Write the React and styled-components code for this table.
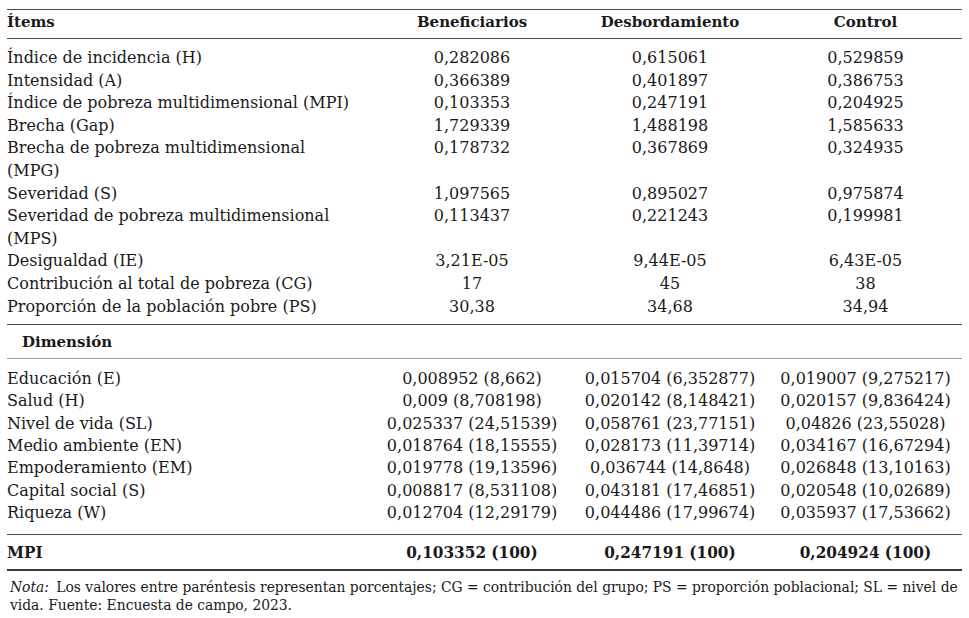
import React from 'react';
import styled, { createGlobalStyle } from 'styled-components';

const GlobalStyle = createGlobalStyle`
  html, body {
    margin: 0;
    padding: 0;
    background: #ffffff;
  }
  body {
    font-family: "DejaVu Serif", "Liberation Serif", serif;
    color: #1a1a1a;
  }
`;

const Page = styled.div`
  width: 969px;
  height: 618px;
  padding: 9px 7px 0 7px;
  box-sizing: border-box;
  overflow: hidden;
`;

const Table = styled.div`
  width: 955px;
  display: flex;
  flex-direction: column;
`;

const Row = styled.div`
  display: grid;
  grid-template-columns: 366px 198px 198px 1fr;
  align-items: start;
  font-size: 16px;
  line-height: ${(p) => p.$lh || '22.6px'};
`;

const HeadRow = styled(Row)`
  border-top: 1.5px solid #4a4a4a;
  border-bottom: 1.5px solid #4a4a4a;
  height: 25px;
  padding-bottom: 3px;
  align-items: center;
  font-size: 15px;
  font-weight: bold;
`;

const Section = styled.div`
  display: flex;
  flex-direction: column;
  padding: ${(p) => p.$pad};
  border-bottom: 1.5px solid #4a4a4a;
`;

const SubHead = styled.div`
  height: 33px;
  display: flex;
  align-items: center;
  padding-left: 15px;
  font-size: 15px;
  font-weight: bold;
  border-bottom: 1px solid #9a9a9a;
`;

const Label = styled.div`
  text-align: left;
  padding-right: 16px;
`;

const Cell = styled.div`
  text-align: center;
  white-space: nowrap;
`;

const TotalRow = styled(Row)`
  height: 34px;
  align-items: center;
  font-family: "DejaVu Serif Condensed", "Liberation Serif", serif;
  font-weight: bold;
  font-size: 17px;
  border-bottom: 2.5px solid #3a3a3a;
`;

const Note = styled.p`
  margin: 7px 0 0 3px;
  font-family: "DejaVu Serif Condensed", "Liberation Serif", serif;
  font-size: 15.4px;
  line-height: 18px;
`;

const NoteLead = styled.em`
  font-style: italic;
  margin-right: 3px;
`;

const items = [
  ['Índice de incidencia (H)', '0,282086', '0,615061', '0,529859'],
  ['Intensidad (A)', '0,366389', '0,401897', '0,386753'],
  ['Índice de pobreza multidimensional (MPI)', '0,103353', '0,247191', '0,204925'],
  ['Brecha (Gap)', '1,729339', '1,488198', '1,585633'],
  ['Brecha de pobreza multidimensional (MPG)', '0,178732', '0,367869', '0,324935'],
  ['Severidad (S)', '1,097565', '0,895027', '0,975874'],
  ['Severidad de pobreza multidimensional (MPS)', '0,113437', '0,221243', '0,199981'],
  ['Desigualdad (IE)', '3,21E-05', '9,44E-05', '6,43E-05'],
  ['Contribución al total de pobreza (CG)', '17', '45', '38'],
  ['Proporción de la población pobre (PS)', '30,38', '34,68', '34,94'],
];

const dimensions = [
  ['Educación (E)', '0,008952 (8,662)', '0,015704 (6,352877)', '0,019007 (9,275217)'],
  ['Salud (H)', '0,009 (8,708198)', '0,020142 (8,148421)', '0,020157 (9,836424)'],
  ['Nivel de vida (SL)', '0,025337 (24,51539)', '0,058761 (23,77151)', '0,04826 (23,55028)'],
  ['Medio ambiente (EN)', '0,018764 (18,15555)', '0,028173 (11,39714)', '0,034167 (16,67294)'],
  ['Empoderamiento (EM)', '0,019778 (19,13596)', '0,036744 (14,8648)', '0,026848 (13,10163)'],
  ['Capital social (S)', '0,008817 (8,531108)', '0,043181 (17,46851)', '0,020548 (10,02689)'],
  ['Riqueza (W)', '0,012704 (12,29179)', '0,044486 (17,99674)', '0,035937 (17,53662)'],
];

const DataRow = ({ row, lh }) => (
  <Row $lh={lh}>
    <Label>{row[0]}</Label>
    <Cell>{row[1]}</Cell>
    <Cell>{row[2]}</Cell>
    <Cell>{row[3]}</Cell>
  </Row>
);

export default function App() {
  return (
    <>
      <GlobalStyle />
      <Page>
        <Table>
          <HeadRow>
            <Label>Ítems</Label>
            <Cell>Beneficiarios</Cell>
            <Cell>Desbordamiento</Cell>
            <Cell>Control</Cell>
          </HeadRow>
          <Section $pad="8px 0 6px 0">
            {items.map((r) => (
              <DataRow key={r[0]} row={r} />
            ))}
          </Section>
          <SubHead>Dimensión</SubHead>
          <Section $pad="9px 0 10px 0">
            {dimensions.map((r) => (
              <DataRow key={r[0]} row={r} lh="22.3px" />
            ))}
          </Section>
          <TotalRow>
            <Label>MPI</Label>
            <Cell>0,103352 (100)</Cell>
            <Cell>0,247191 (100)</Cell>
            <Cell>0,204924 (100)</Cell>
          </TotalRow>
        </Table>
        <Note>
          <NoteLead>Nota:</NoteLead> Los valores entre paréntesis representan porcentajes; CG = contribución del grupo; PS = proporción poblacional; SL = nivel de vida. Fuente: Encuesta de campo, 2023.
        </Note>
      </Page>
    </>
  );
}
